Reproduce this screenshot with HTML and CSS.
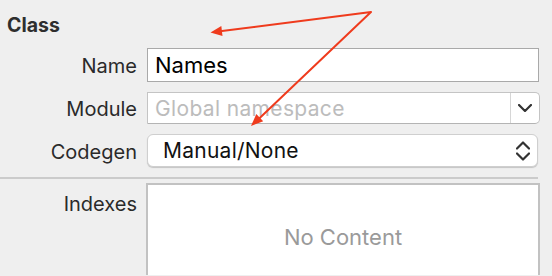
FILE: index.html
```html
<!DOCTYPE html>
<html>
<head>
<meta charset="utf-8">
<link rel="stylesheet" href="styles.css">
</head>
<body>
<div class="panel">
  <div class="title">Class</div>
  <div class="form">
    <div class="lbl">Name</div>
    <div class="field text"><span class="value">Names</span></div>
    <div class="lbl">Module</div>
    <div class="field combo">
      <span class="ph">Global namespace</span>
      <span class="combo-btn"><svg class="chev" width="14" height="8" viewBox="0 0 14 8"><polyline points="1,1 7,7 13,1"/></svg></span>
    </div>
    <div class="lbl">Codegen</div>
    <div class="popup">
      <span class="pvalue">Manual/None</span>
      <svg class="updown" width="14" height="20" viewBox="0 0 14 20"><polyline points="1,7.5 7,1.5 13,7.5"/><polyline points="1,12.5 7,18.5 13,12.5"/></svg>
    </div>
  </div>
  <div class="sep"></div>
  <div class="form lower">
    <div class="lbl top">Indexes</div>
    <div class="table"><span class="empty">No Content</span></div>
  </div>
  <svg class="arrows" width="552" height="276" viewBox="0 0 552 276">
    <polyline points="218,31.6 371,12 256,121.5" fill="none"/>
    <polygon points="210.5,32.5 222.5,36 221.3,26"/>
    <polygon points="251,126 263.2,121.3 256.3,114.1"/>
  </svg>
</div>
</body>
</html>
```
FILE: styles.css
```css
html, body {
  margin: 0;
  padding: 0;
  background: #efefef;
}
body {
  width: 552px;
  height: 276px;
  overflow: hidden;
  font-family: Inter, "Liberation Sans", sans-serif;
}
.panel {
  position: relative;
  width: 552px;
  height: 276px;
  overflow: hidden;
}
.title {
  font-weight: 700;
  font-size: 19.5px;
  line-height: 22px;
  color: #2e2e2e;
  padding: 14px 0 0 7px;
  height: 34px;
  box-sizing: border-box;
}
.form {
  display: grid;
  grid-template-columns: 137px 392px;
  column-gap: 10px;
  row-gap: 10px;
  padding-top: 14px;
  align-items: center;
}
.lbl {
  text-align: right;
  font-size: 20px;
  color: #2a2a2a;
  padding-top: 2px;
}
.field {
  box-sizing: border-box;
  background: #fff;
  display: flex;
  align-items: center;
}
.text {
  height: 34px;
  border: 1px solid #a9a9a9;
  padding-left: 7px;
}
.value {
  font-size: 22px;
  color: #000;
}
.combo {
  height: 32px;
  border: 1px solid #c4c4c4;
  border-bottom-color: #b4b4b4;
  border-radius: 0 5px 5px 0;
  padding-left: 7px;
  width: 393px;
}
.ph {
  flex: 1;
  font-size: 21px;
  letter-spacing: 0.35px;
  color: #bcbcbc;
}
.combo-btn {
  width: 28px;
  height: 100%;
  border-left: 1px solid #d6d6d6;
  display: flex;
  align-items: center;
  justify-content: center;
}
.chev polyline, .updown polyline {
  fill: none;
  stroke: #333;
  stroke-width: 2.2;
  stroke-linecap: round;
  stroke-linejoin: round;
}
.popup {
  box-sizing: border-box;
  height: 33px;
  background: #fff;
  border: 1px solid #cfcfcf;
  border-radius: 6px;
  box-shadow: 0 1px 1px rgba(0,0,0,0.18);
  display: flex;
  align-items: center;
  padding: 0 7px 0 15px;
  width: 391px;
}
.pvalue {
  flex: 1;
  font-size: 21px;
  letter-spacing: 0.25px;
  color: #111;
}
.sep {
  height: 2px;
  background: #cbcbcb;
  width: 538px;
  margin-top: 10px;
}
.form.lower {
  padding-top: 4px;
  align-items: start;
  column-gap: 9px;
}
.lbl.top {
  padding-top: 9px;
}
.table {
  box-sizing: border-box;
  width: 394px;
  height: 92px;
  padding-top: 14px;
  background: #fff;
  border: 2px solid #c2c2c2;
  border-bottom: none;
  display: flex;
  align-items: center;
  justify-content: center;
}
.empty {
  font-size: 22px;
  color: #9a9a9a;
}
.arrows {
  position: absolute;
  left: 0;
  top: 0;
  pointer-events: none;
}
.arrows polyline {
  stroke: #ef3b1d;
  stroke-width: 2;
  stroke-linejoin: round;
}
.arrows polygon {
  fill: #ef3b1d;
}
```
